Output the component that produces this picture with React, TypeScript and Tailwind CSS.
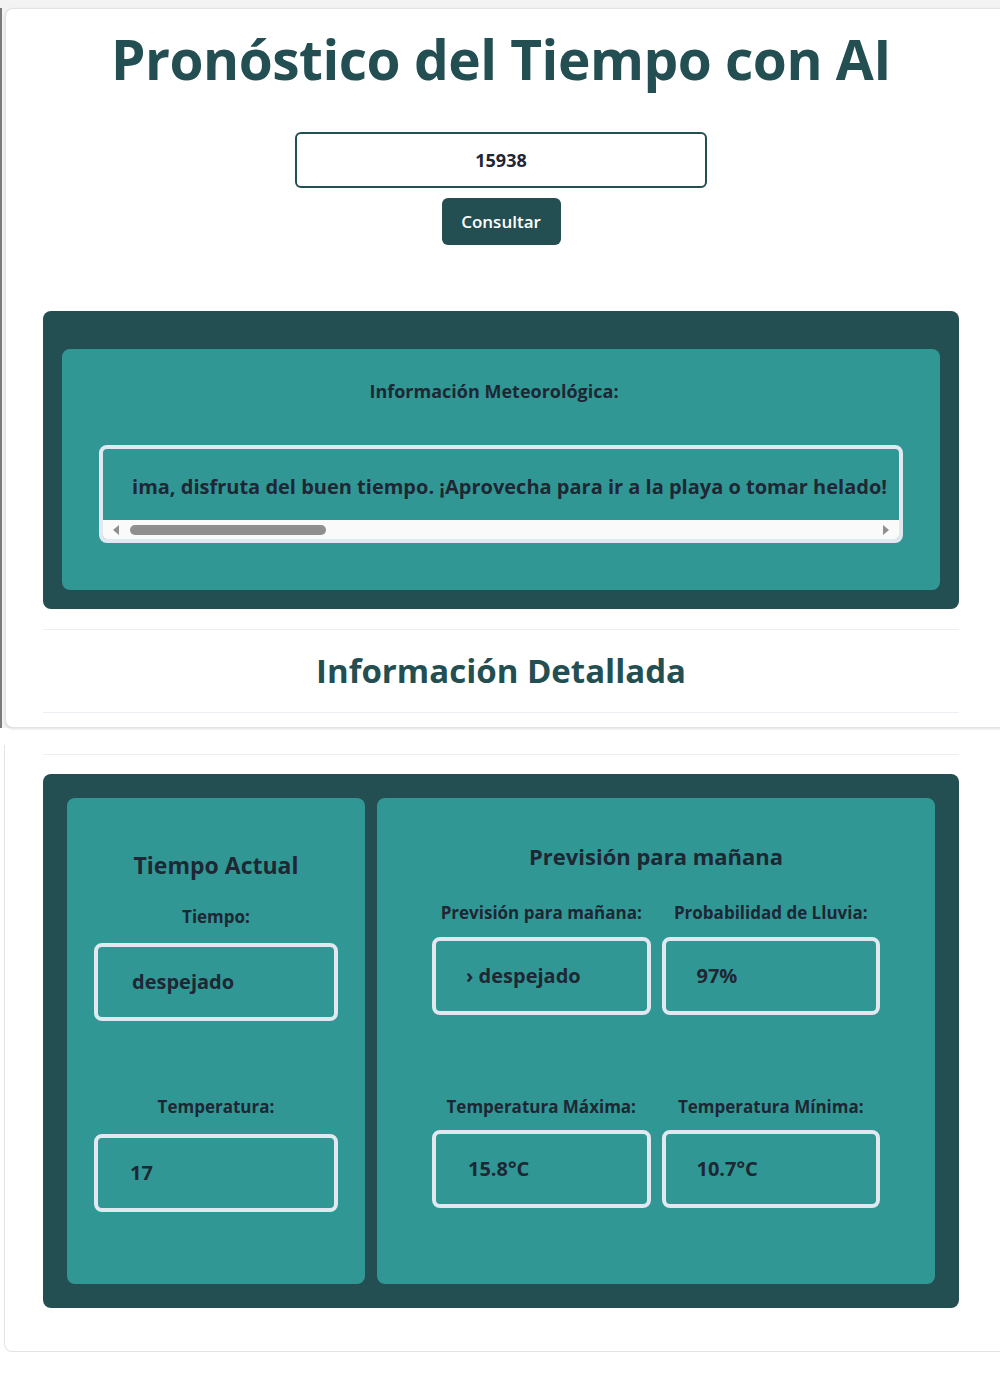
import React from "react";

const ValueBox = ({ value, className = "" }: { value: string; className?: string }) => (
  <div
    className={`flex h-[78px] items-center rounded-lg border-[4px] border-[#e2e8f0] text-[20px] font-bold text-[#1e2733] ${className}`}
  >
    {value}
  </div>
);

const Field = ({ label, value, pad, gap }: { label: string; value: string; pad: string; gap: string }) => (
  <div className="flex flex-col items-center">
    <p className="text-[17px] font-bold text-[#1e2733]">{label}</p>
    <ValueBox value={value} className={`w-full ${gap} ${pad}`} />
  </div>
);

export default function App() {
  return (
    <div className="w-[1000px] overflow-hidden bg-white font-['Open_Sans',sans-serif]">
      {/* first capture */}
      <div className="flex h-[728px] bg-[#f3f3f3] pt-[8px]">
        <div className="w-[2px] shrink-0 bg-[#7b7b7b]" />
        <div className="ml-[3px] w-[1000px] shrink-0 rounded-tl-lg rounded-bl-lg border border-r-0 border-[#e3e3e3] bg-white shadow-sm">
          <div className="ml-[37px] w-[916px]">
            <h1 className="mt-[14px] text-center text-[55px] leading-[72px] font-bold tracking-[-0.5px] text-[#234e52]">
              Pronóstico del Tiempo con AI
            </h1>
            <div className="mt-[37px] flex flex-col items-center">
              <div className="flex h-[56px] w-[412px] items-center justify-center rounded-md border-2 border-[#234e52] text-[18px] font-bold text-[#1e2733]">
                15938
              </div>
              <button
                type="button"
                className="mt-[10px] h-[47px] w-[119px] rounded-md bg-[#234e52] text-[17px] font-semibold text-white"
              >
                Consultar
              </button>
            </div>

            <section className="mt-[66px] rounded-lg bg-[#234e52] px-[19px] pt-[38px] pb-[19px]">
              <div className="rounded-lg bg-[#319795] px-[37px] pt-[29px] pb-[47px]">
                <p className="pr-[14px] text-center text-[18px] font-bold text-[#1e2733]">
                  Información Meteorológica:
                </p>
                <div className="mt-[40px] overflow-hidden rounded-lg border-[4px] border-[#e2e8f0]">
                  <div className="flex h-[71px] min-w-0 items-center pt-[4px] pr-[12px] pl-[30px]">
                    <div className="flex min-w-0 flex-1 justify-end overflow-hidden whitespace-nowrap text-[20px] font-bold text-[#1e2733]">
                      Con el cielo despejado y una temperatura agradable, si te gusta este clima, disfruta del buen tiempo. ¡Aprovecha para ir a la playa o tomar helado!
                    </div>
                  </div>
                  <div className="flex h-[19px] items-center bg-[#fafafa] px-[10px]">
                    <span className="h-0 w-0 border-y-[5px] border-r-[6px] border-y-transparent border-r-[#8f8f8f]" />
                    <span className="ml-[11px] h-[10px] w-[196px] rounded-full bg-[#8f8f8f]" />
                    <span className="ml-auto h-0 w-0 border-y-[5px] border-l-[6px] border-y-transparent border-l-[#8f8f8f]" />
                  </div>
                </div>
              </div>
            </section>

            <div className="mt-[20px] border-t border-[#eceef3]" />
            <h2 className="py-[21px] text-center text-[33px] leading-[40px] font-bold text-[#234e52]">
              Información Detallada
            </h2>
            <div className="border-t border-[#eceef3]" />
          </div>
        </div>
      </div>

      {/* second capture */}
      <div className="flex h-[624px] bg-white pt-[17px]">
        <div className="ml-[4px] w-[1000px] shrink-0 rounded-bl-lg border-b border-l border-[#e3e3e3] bg-white">
          <div className="ml-[38px] w-[916px]">
            <div className="mt-[9px] border-t border-[#eceef3]" />
            <section className="mt-[19px] flex h-[534px] gap-[12px] rounded-lg bg-[#234e52] p-[24px]">
              <div className="w-[298px] rounded-lg bg-[#319795] px-[27px] pt-[50px]">
                <h3 className="text-center text-[23px] font-bold text-[#1e2733]">Tiempo Actual</h3>
                <div className="mt-[21px]">
                  <Field label="Tiempo:" value="despejado" pad="pl-[34px]" gap="mt-[14px]" />
                </div>
                <div className="mt-[73px]">
                  <Field label="Temperatura:" value="17" pad="pl-[32px]" gap="mt-[14px]" />
                </div>
              </div>
              <div className="flex-1 rounded-lg bg-[#319795] px-[55px] pt-[42px]">
                <h3 className="text-center text-[22px] font-bold text-[#1e2733]">Previsión para mañana</h3>
                <div className="mt-[27px] grid grid-cols-2 gap-x-[11px]">
                  <Field label="Previsión para mañana:" value="› despejado" pad="pl-[30px]" gap="mt-[11px]" />
                  <Field label="Probabilidad de Lluvia:" value="97%" pad="pl-[31px]" gap="mt-[11px]" />
                </div>
                <div className="mt-[79px] grid grid-cols-2 gap-x-[11px]">
                  <Field label="Temperatura Máxima:" value="15.8°C" pad="pl-[32px]" gap="mt-[11px]" />
                  <Field label="Temperatura Mínima:" value="10.7°C" pad="pl-[31px]" gap="mt-[11px]" />
                </div>
              </div>
            </section>
          </div>
        </div>
      </div>
      <div className="h-[48px] bg-white" />
    </div>
  );
}
